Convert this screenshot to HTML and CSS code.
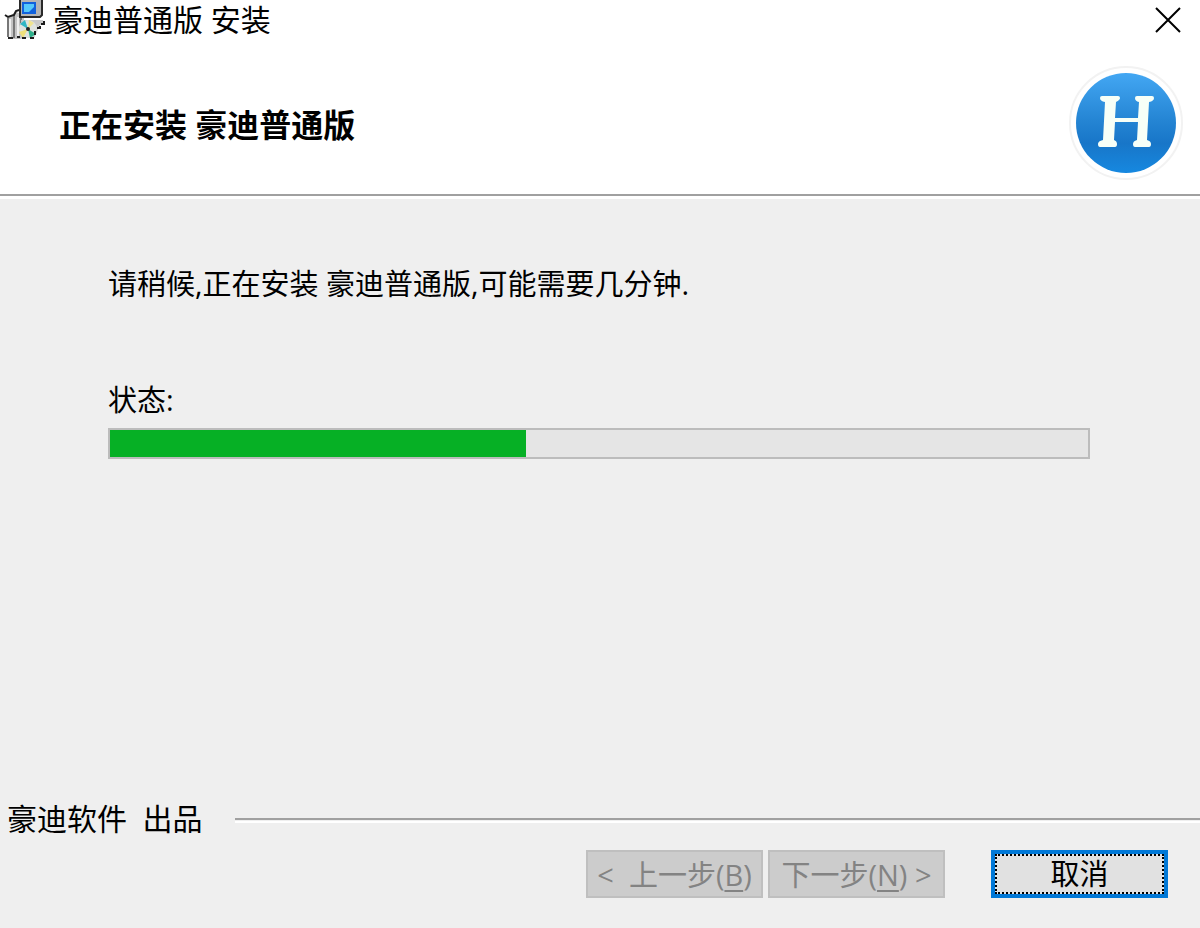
FILE: index.html
```html
<!DOCTYPE html>
<html lang="zh-CN">
   <head>
      <meta charset="UTF-8">
      <title>豪迪普通版 安装</title>
      <link rel="stylesheet" href="styles.css">
   </head>
   <body>
      <header>
         <div class="titlebar">
            <svg class="app-icon" width="42" height="40" viewBox="0 0 42 40" aria-hidden="true">
               <!-- box -->
               <path d="M4 17l8-5 8 3v23l-4 1H4z" fill="#c4c4c4"/>
               <path d="M6 19v19M14 17v21" stroke="#efefef" stroke-width="2"/>
               <path d="M4 18v19M10 15v23M17 17v6" stroke="#777" stroke-width="2"/>
               <path d="M1 15l3 2 6-2 2-4 3-1" fill="none" stroke="#1c1c1c" stroke-width="2"/>
               <path d="M4 38h5M13 37h3" stroke="#222" stroke-width="2"/>
               <!-- disc -->
               <path d="M17 20h22v3l-4 3-2 6-3 6H18z" fill="#c9c9c9"/>
               <circle cx="24" cy="29" r="9" fill="#dfe3df"/>
               <path d="M24 29l-8-5 5-4z" fill="#2fb6c4"/>
               <path d="M24 29l-9 3 4 6z" fill="#efe07a"/>
               <path d="M24 29l2 9 6-4z" fill="#2fb08c"/>
               <path d="M24 29l1-9 5 3z" fill="#f0e390"/>
               <circle cx="24" cy="29" r="2" fill="#222"/>
               <path d="M18 38h4M26 38h4M31 35v-4M33 28h3v-2M37 24h3v-3" fill="none" stroke="#1c1c1c" stroke-width="2"/>
               <!-- monitor -->
               <path d="M15 0h23v16l-3 2H15z" fill="#b4b4b4"/>
               <path d="M16 0v17h20l2-2V0" fill="none" stroke="#2a2a2a" stroke-width="2"/>
               <rect x="18" y="2" width="14" height="12" fill="#1161dc"/>
               <path d="M20 4h10v3l-5 5h-5z" fill="#55c8fb"/>
            </svg>
            <span class="caption">豪迪普通版 安装</span>
            <button class="close" type="button" aria-label="关闭">
               <svg width="26" height="26" viewBox="0 0 26 26"><path d="M1 1l24 24M25 1L1 25" stroke="#000" stroke-width="2"/></svg>
            </button>
         </div>
         <div class="banner">
            <h1>正在安装 豪迪普通版</h1>
            <svg class="logo" width="116" height="116" viewBox="0 0 116 116" aria-hidden="true">
               <defs>
                  <linearGradient id="blue" x1="0" y1="0" x2="0" y2="1">
                     <stop offset="0" stop-color="#43a7f3"/>
                     <stop offset="0.5" stop-color="#2383d2"/>
                     <stop offset="0.7" stop-color="#1876c8"/>
                     <stop offset="1" stop-color="#1688e0"/>
                  </linearGradient>
               </defs>
               <circle cx="58" cy="59" r="56" fill="#fff" stroke="#f2f2f2" stroke-width="2"/>
               <circle cx="58" cy="59" r="50" fill="url(#blue)"/>
               <path d="M34 32h16q2 0 2 2t-4 4l-1 16h23l1-16q-4-1-4-4 0-2 2-2h15q2 0 2 2 0 3-5 4l-2 38q4 1 4 4 0 3-2 3H67q-2 0-2-3t4-4l1-18H47l-1 18q3 1 3 4 0 3-2 3H32q-2 0-2-3t5-4l2-38q-5-1-5-4 0-2 2-2z" fill="#f7fff7"/>
            </svg>
         </div>
      </header>

      <main>
         <p>请稍候,正在安装 豪迪普通版,可能需要几分钟.</p>
         <label for="status">状态:</label>
         <progress id="status" value="425" max="1000"></progress>
      </main>

      <footer>
         <div class="brand">豪迪软件&nbsp; 出品</div>
         <div class="buttons">
            <button type="button" disabled>&lt;&nbsp; 上一步(<u>B</u>)</button>
            <button type="button" disabled>下一步(<u>N</u>) &gt;</button>
            <button type="button" class="cancel"><span>取消</span></button>
         </div>
      </footer>
   </body>
</html>
```

FILE: styles.css
```css
* {
  box-sizing: border-box;
}
body {
  font-family: "Open Sans", "Noto Sans CJK SC", sans-serif;
  font-size: 29px;
  line-height: 40px;
  color: #000;
  background-color: #efefef;
  margin: 0;
  min-height: 100vh;
  display: flex;
  flex-direction: column;
}

/* Title bar and banner */
header {
  background-color: #fff;
  border-bottom: 2px solid #a0a0a0;
  box-shadow: 0 3px 0 #fff;
}
.titlebar {
  display: flex;
  align-items: center;
  padding: 0 16px 0 4px;
}
.caption {
  flex: 1;
  font-size: 30px;
  padding-left: 7px;
}
.close {
  display: flex;
  padding: 3px;
  border: none;
  background: none;
}
.banner {
  display: flex;
  justify-content: space-between;
  align-items: center;
  padding: 24px 16px 14px 59px;
}
h1 {
  font-size: 32px;
  line-height: 40px;
  font-weight: bold;
  margin: 0;
  padding-top: 6px;
}

/* Install progress */
main {
  flex: 1;
  padding: 68px 110px 40px 108px;
}
p {
  margin: 0 0 76px;
}
label {
  display: block;
  margin-bottom: 8px;
}
progress {
  display: block;
  appearance: none;
  width: 100%;
  height: 31px;
  border: 2px solid #bcbcbc;
  background-color: #e5e5e5;
}
progress::-webkit-progress-bar {
  background-color: #e5e5e5;
}
progress::-webkit-progress-value {
  background-color: #06b025;
}

/* Bottom bar */
.brand {
  display: flex;
  align-items: center;
  gap: 32px;
  font-size: 30px;
  padding-left: 7px;
}
.brand::after {
  content: "";
  flex: 1;
  height: 2px;
  background-color: #a0a0a0;
  box-shadow: 0 3px 0 #fff;
}
.buttons {
  display: flex;
  justify-content: flex-end;
  gap: 5px;
  padding: 11px 32px 30px;
}
.buttons button {
  width: 177px;
  height: 48px;
  padding: 2px 0 0;
  font: inherit;
  white-space: nowrap;
  color: #838383;
  background-color: #ccc;
  border: 2px solid #bfbfbf;
}
u {
  text-decoration-thickness: 2px;
  text-underline-offset: 4px;
}
.buttons .cancel {
  display: flex;
  margin-left: 41px;
  padding: 0;
  color: #000;
  background-color: #e1e1e1;
  border: 4px solid #0078d7;
}
.cancel span {
  flex: 1;
  line-height: 36px;
  border: 2px dotted #000;
}
```
